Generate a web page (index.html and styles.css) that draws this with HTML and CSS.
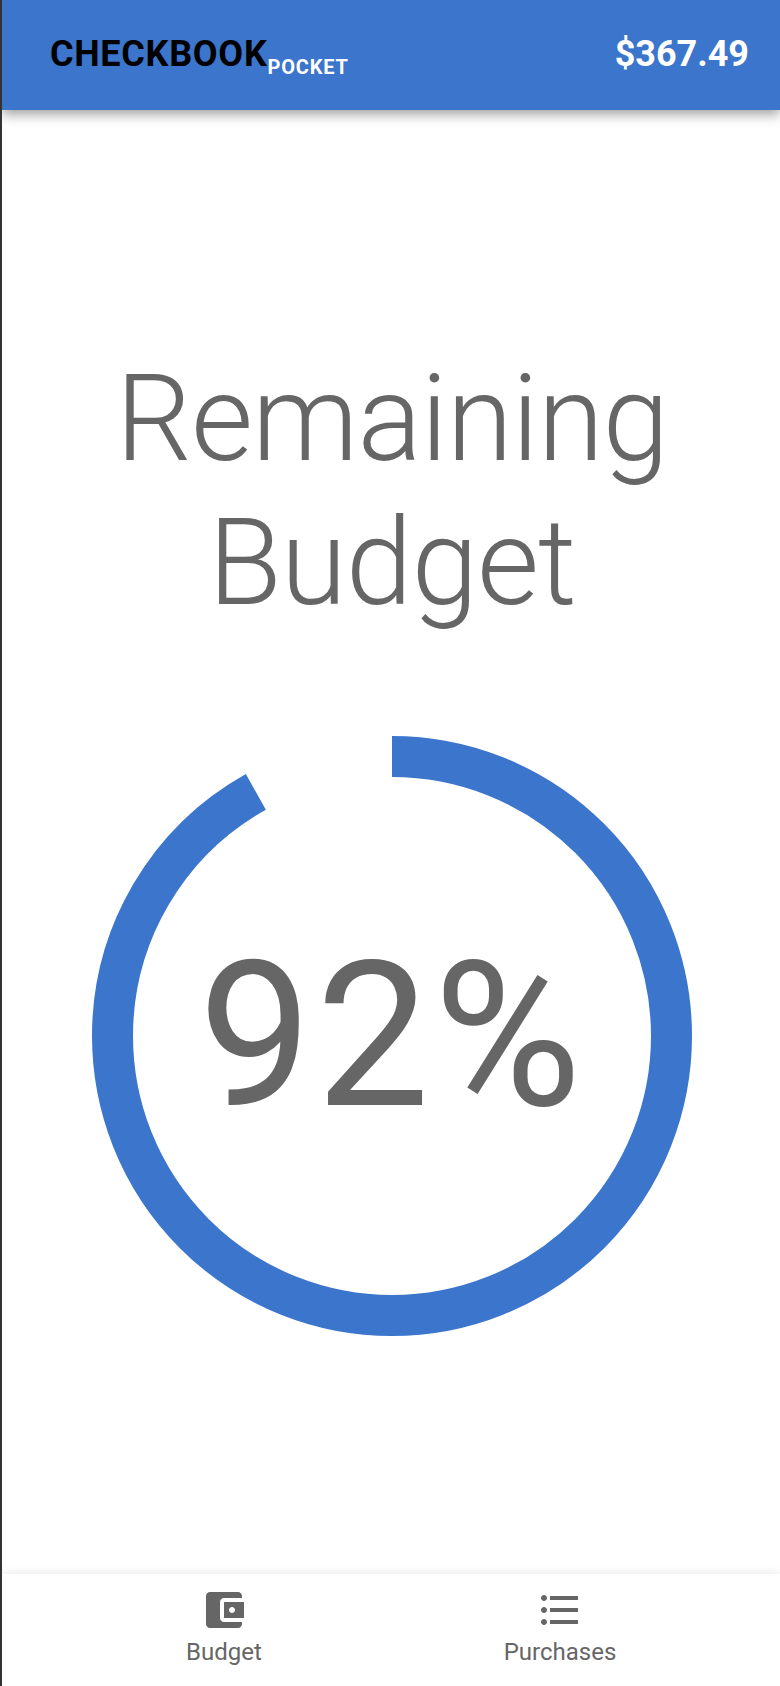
FILE: index.html
```html
<!DOCTYPE html>
<html>
<head>
    <title>Checkbook Pocket</title>
    <link rel="stylesheet" href="styles.css">
</head>
<body>
    <div class="app">
        <header class="topbar">
            <div class="brand">
                <span class="brand-name">CHECKBOOK</span><span class="brand-sub">POCKET</span>
            </div>
            <div class="balance">$367.49</div>
        </header>
        <main class="content">
            <h1 class="title">Remaining Budget</h1>
            <div class="gauge">
                <svg class="gauge-ring" width="600" height="600" viewBox="0 0 600 600">
                    <circle cx="300" cy="300" r="279.5" fill="none" stroke="#3b75cc" stroke-width="41" pathLength="100" stroke-dasharray="91.9 8.1" transform="rotate(-90 300 300)"/>
                </svg>
                <div class="gauge-value">92%</div>
            </div>
        </main>
        <nav class="tabs">
            <div class="tab">
                <svg class="tab-icon" width="48" height="48" viewBox="0 0 24 24"><path d="M21 18v1c0 1.1-.9 2-2 2H5c-1.11 0-2-.9-2-2V5c0-1.1.89-2 2-2h14c1.1 0 2 .9 2 2v1h-9c-1.11 0-2 .9-2 2v8c0 1.1.89 2 2 2h9zm-9-2h10V8H12v8zm4-2.5c-.83 0-1.5-.67-1.5-1.5s.67-1.5 1.5-1.5 1.5.67 1.5 1.5-.67 1.5-1.5 1.5z"/></svg>
                <span class="tab-label">Budget</span>
            </div>
            <div class="tab">
                <svg class="tab-icon" width="48" height="48" viewBox="0 0 24 24"><path d="M4 10.5c-.83 0-1.5.67-1.5 1.5s.67 1.5 1.5 1.5 1.5-.67 1.5-1.5-.67-1.5-1.5-1.5zm0-6c-.83 0-1.5.67-1.5 1.5S3.17 7.5 4 7.5 5.5 6.83 5.5 6 4.83 4.5 4 4.5zm0 12c-.83 0-1.5.68-1.5 1.5s.68 1.5 1.5 1.5 1.5-.68 1.5-1.5-.67-1.5-1.5-1.5zM7 19h14v-2H7v2zm0-6h14v-2H7v2zm0-8v2h14V5H7z"/></svg>
                <span class="tab-label">Purchases</span>
            </div>
        </nav>
    </div>
</body>
</html>
```
FILE: styles.css
```css
html, body {
    margin: 0;
    height: 100%;
}
body {
    font-family: Roboto, "Liberation Sans", sans-serif;
    background-color: #fff;
    color: #666;
}
.app {
    height: 100%;
    border-left: 2px solid #333;
    box-sizing: border-box;
    display: flex;
    flex-direction: column;
    overflow: hidden;
}
.topbar {
    height: 110px;
    flex-shrink: 0;
    box-sizing: border-box;
    background-color: #3b75cc;
    box-shadow: 0 4px 12px rgba(0, 0, 0, 0.4);
    display: flex;
    align-items: center;
    justify-content: space-between;
    padding: 0 31px 2px 48px;
}
.brand {
    display: flex;
    align-items: baseline;
}
.brand-name {
    color: #000;
    font-size: 36px;
    font-weight: 700;
    letter-spacing: 0.7px;
}
.brand-sub {
    color: #fff;
    font-size: 20px;
    font-weight: 700;
    letter-spacing: 0.8px;
    position: relative;
    top: 8px;
}
.balance {
    color: #fff;
    font-size: 36px;
    font-weight: 700;
}
.content {
    flex: 1;
    display: flex;
    flex-direction: column;
    align-items: center;
    padding: 237px 0 0 2px;
}
.title {
    margin: 0;
    width: 560px;
    text-align: center;
    font-size: 120px;
    font-weight: 300;
    line-height: 144px;
    letter-spacing: -1px;
}
.gauge {
    margin-top: 101px;
    display: grid;
    place-items: center;
}
.gauge-ring, .gauge-value {
    grid-area: 1 / 1;
}
.gauge-ring {
    display: block;
}
.gauge-value {
    font-size: 202px;
    font-weight: 400;
    letter-spacing: 4px;
}
.tabs {
    height: 112px;
    flex-shrink: 0;
    padding-left: 2px;
    background-color: #fff;
    box-shadow: 0 -2px 8px rgba(0, 0, 0, 0.08);
    display: flex;
    justify-content: center;
}
.tab {
    width: 336px;
    display: flex;
    flex-direction: column;
    align-items: center;
    padding-top: 12px;
}
.tab-icon {
    display: block;
    fill: #666;
}
.tab-label {
    font-size: 24px;
    line-height: 28px;
    margin-top: 4px;
}
```
